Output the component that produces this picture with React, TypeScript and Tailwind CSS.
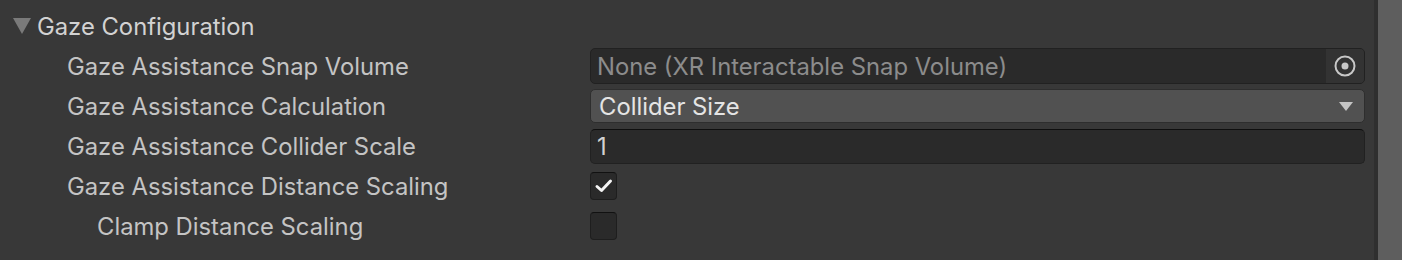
import { ReactNode } from "react";

function Row({ label, indent = false, children }: { label: string; indent?: boolean; children?: ReactNode }) {
  return (
    <div className="flex h-[40px] items-center">
      <div className={`w-[590px] shrink-0 pt-[2px] text-[23.8px] text-[#c4c4c4] ${indent ? "pl-[97px]" : "pl-[67px]"}`}>{label}</div>
      <div className="flex flex-1 items-center">{children}</div>
    </div>
  );
}

function Checkbox({ checked }: { checked?: boolean }) {
  return (
    <div className="flex h-[28px] w-[27px] items-center justify-center rounded-[4px] border border-[#1e1e1e] border-t-[#111111] bg-[#2a2a2a]">
      {checked && (
        <svg width="20" height="18" viewBox="0 0 20 18">
          <path d="M3 9.5 L7.5 13.5 L16.5 4" fill="none" stroke="#f4f4f4" strokeWidth="3" strokeLinecap="round" strokeLinejoin="round" />
        </svg>
      )}
    </div>
  );
}

export default function App() {
  return (
    <div className="flex h-[260px] w-[1402px] overflow-hidden bg-[#383838]" style={{ fontFamily: "Inter, 'Noto Sans', sans-serif" }}>
      <div className="flex flex-1 flex-col pt-[6px] pr-[9px]">
        <div className="flex h-[40px] items-center">
          <svg width="18" height="16" viewBox="0 0 18 16" className="ml-[13px] mr-[6px]">
            <path d="M0 0 H18 L9 16 Z" fill="#7a7a7a" />
          </svg>
          <span className="pt-[2px] text-[23.8px] text-[#d2d2d2]">Gaze Configuration</span>
        </div>

        <Row label="Gaze Assistance Snap Volume">
          <div className="flex h-[36px] flex-1 items-stretch overflow-hidden rounded-[5px] border border-[#212121] bg-[#2a2a2a]">
            <div className="flex flex-1 items-center pl-[6px] pt-[2px] text-[23.8px] text-[#8c8c8c]">None (XR Interactable Snap Volume)</div>
            <div className="flex w-[38px] items-center justify-center bg-[#333333]">
              <svg width="24" height="24" viewBox="0 0 24 24">
                <circle cx="12" cy="12" r="9.5" fill="none" stroke="#c8c8c8" strokeWidth="2" />
                <circle cx="12" cy="12" r="3.5" fill="#c8c8c8" />
              </svg>
            </div>
          </div>
        </Row>

        <Row label="Gaze Assistance Calculation">
          <div className="flex h-[34px] flex-1 items-center justify-between rounded-[5px] border border-[#2e2e2e] bg-[#515151] pl-[8px] pr-[11px]">
            <span className="pt-[2px] text-[23.8px] text-[#e4e4e4]">Collider Size</span>
            <svg width="14" height="9" viewBox="0 0 14 9">
              <path d="M0 0 H14 L7 9 Z" fill="#c4c4c4" />
            </svg>
          </div>
        </Row>

        <Row label="Gaze Assistance Collider Scale">
          <div className="flex h-[35px] flex-1 items-center rounded-[5px] border border-[#212121] border-t-[#0f0f0f] bg-[#2a2a2a] pl-[6px] pt-[2px] text-[23.8px] text-[#d2d2d2]">1</div>
        </Row>

        <Row label="Gaze Assistance Distance Scaling">
          <Checkbox checked />
        </Row>

        <Row label="Clamp Distance Scaling" indent>
          <Checkbox />
        </Row>
      </div>
      <div className="w-[28px] shrink-0 border-l-[4px] border-[#2f2f2f] bg-[#5e5e5e]" />
    </div>
  );
}
